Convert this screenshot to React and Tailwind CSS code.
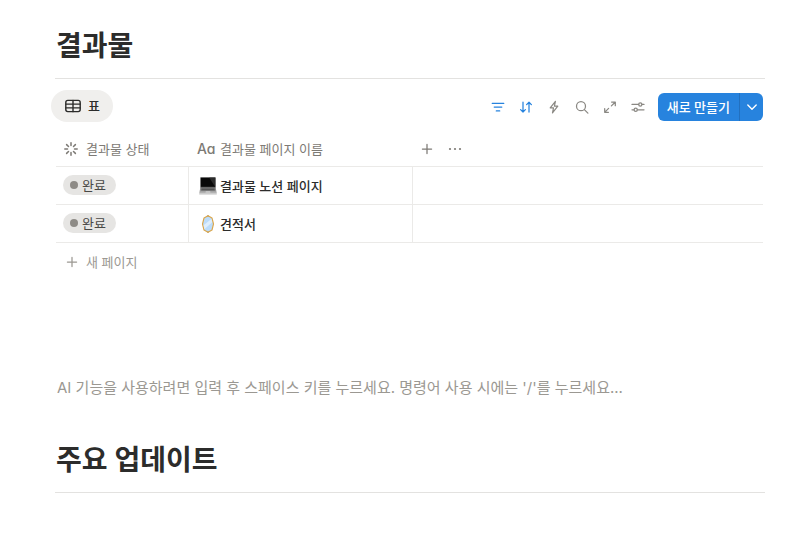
import React, { useState } from 'react';

const rows = [
  { id: 1, status: '완료', name: '결과물 노션 페이지', icon: 'laptop' },
  { id: 2, status: '완료', name: '견적서', icon: 'mirror' },
];

// ICONS
const Icon = ({ size = 16, children }) => (
  <svg width={size} height={size} viewBox="0 0 16 16" fill="none" stroke="currentColor" strokeWidth="1.25" strokeLinecap="round" strokeLinejoin="round" aria-hidden="true" className="shrink-0">
    {children}
  </svg>
);

const TableIcon = () => (
  <Icon size={18}>
    <rect x="1.6" y="3" width="12.8" height="10" rx="1.8" />
    <path d="M1.6 6.3h12.8M1.6 9.7h12.8M8 3v10" />
  </Icon>
);

const FilterIcon = () => (
  <Icon><path d="M2.2 4.3h11.6M4.2 8.1h7.6M6.3 11.9h3.4" /></Icon>
);

const SortIcon = () => (
  <Icon><path d="M5 3.2v9.8M2.6 10.6 5 13l2.4-2.4M11 13V3.2M8.6 5.6 11 3.2l2.4 2.4" /></Icon>
);

const BoltIcon = () => (
  <Icon><path d="M9.4 2.3 4.2 8.8h3.3L6.5 13.8 11.8 7.2H8.4z" strokeWidth="1.2" /></Icon>
);

const SearchIcon = () => (
  <Icon><circle cx="7" cy="7.2" r="4.5" /><path d="m10.4 10.6 3.5 3.5" /></Icon>
);

const ExpandIcon = () => (
  <Icon><path d="M9.6 3h3.7v3.7M13.1 3.2 9.4 6.9M6.4 13.3H2.7V9.6M2.9 13.1l3.7-3.7" /></Icon>
);

const SettingsIcon = () => (
  <Icon>
    <path d="M2 5.4h6.6M12 5.4h2M2 10.8h2M7.4 10.8H14" />
    <circle cx="10.3" cy="5.4" r="1.6" />
    <circle cx="5.7" cy="10.8" r="1.6" />
  </Icon>
);

const StatusIcon = () => (
  <svg width="14" height="14" viewBox="0 0 14 14" fill="none" stroke="currentColor" strokeWidth="1.5" strokeLinecap="round" aria-hidden="true" className="shrink-0">
    <path d="M7 .8v2.7M7 10.5v2.7M.8 7h2.7M10.5 7h2.7M2.6 2.6l1.9 1.9M9.5 9.5l1.9 1.9M2.6 11.4l1.9-1.9M9.5 4.5l1.9-1.9" />
  </svg>
);

const PlusIcon = () => (
  <Icon><path d="M8 3.4v9.2M3.4 8h9.2" /></Icon>
);

const LaptopIcon = () => (
  <svg width="18" height="18" viewBox="0 0 18 18" aria-hidden="true" className="shrink-0">
    <defs>
      <linearGradient id="base" x1="0" y1="0" x2="0" y2="1">
        <stop offset="0" stopColor="#777" />
        <stop offset="1" stopColor="#b8b8b8" />
      </linearGradient>
    </defs>
    <path d="M1.3.3h15.4v10.6H1.3z" fill="#555" />
    <path d="M1.9.8h14.2v9H1.9z" fill="#080808" />
    <path d="M10.3.8h5.8v9z" fill="#2b2b2b" />
    <path d="M1.3 10.9h15.4l1.1 5.1H.2z" fill="url(#base)" />
    <path d="M2.5 11.5h13l.4 1.9H2.1z" fill="#555" />
    <path d="M6.8 14.2h4.4l.3 1.5h-5z" fill="#ccc" />
    <path d="M.2 16h17.6v1.6H.2z" fill="#ccc" />
  </svg>
);

const MirrorIcon = () => (
  <svg width="18" height="18" viewBox="0 0 18 18" aria-hidden="true" className="shrink-0">
    <path d="M9 .7 13 3 14.5 9 13 15 9 17.3 5 15 3.5 9 5 3z" fill="#bcdcfa" stroke="#dba64b" strokeWidth="1.1" strokeLinejoin="round" />
    <path d="M4.6 10.2 12.4 4l.8 3.2-7.8 7z" fill="#deeefd" />
    <circle cx="9" cy=".9" r=".7" fill="#b98530" />
    <circle cx="9" cy="17.1" r=".7" fill="#b98530" />
  </svg>
);

const tools = [
  { label: '필터', icon: FilterIcon, active: true },
  { label: '정렬', icon: SortIcon, active: true },
  { label: '자동화', icon: BoltIcon },
  { label: '검색', icon: SearchIcon },
  { label: '전체 화면', icon: ExpandIcon },
  { label: '설정', icon: SettingsIcon },
];

const Heading = ({ children }) => (
  <h2 className="border-b border-[#e3e2e0] pt-px pb-3.5 pl-px text-[28px] leading-9 font-semibold">{children}</h2>
);

export default function App() {
  const [text, setText] = useState('');

  return (
    <main className="min-h-screen bg-white pt-[27px] pr-8 pb-12 pl-[55px] font-['Inter','Noto_Sans_CJK_KR',sans-serif] text-[#2c2c2b]">
      <Heading>결과물</Heading>

      {/* VIEW BAR */}
      <div className="mt-[11px] -ml-1 mr-0.5 flex items-center justify-between">
        <button type="button" className="flex h-8 items-center gap-1.5 rounded-full bg-[#f0efed] px-[13px] text-[13px] leading-5 font-medium">
          <TableIcon />
          표
        </button>
        <div className="flex items-center pt-0.5">
          {tools.map(({ label, icon: ToolIcon, active }) => (
            <button
              key={label}
              type="button"
              aria-label={label}
              className={`flex size-7 items-center justify-center ${active ? 'text-[#2783de]' : 'text-[#8a8883]'}`}
            >
              <ToolIcon />
            </button>
          ))}
          <div className="ml-1.5 flex h-7 overflow-hidden rounded-md bg-[#2783de] text-white">
            <button type="button" className="px-[9px] text-[13px] leading-5 font-medium">새로 만들기</button>
            <button type="button" aria-label="새로 만들기 옵션" className="flex w-6 items-center justify-center border-l border-[#2270bf]">
              <svg width="12" height="12" viewBox="0 0 12 12" fill="none" stroke="currentColor" strokeWidth="1.4" strokeLinecap="round" strokeLinejoin="round" aria-hidden="true">
                <path d="m1.8 4 4.2 4.2L10.2 4" />
              </svg>
            </button>
          </div>
        </div>
      </div>

      {/* TABLE */}
      <div className="mt-2.5 mr-0.5 ml-px">
        <table className="w-full table-fixed border-separate border-spacing-0 text-left text-[13px] leading-5">
          <thead className="text-[#7d7a75]">
            <tr className="h-[35px]">
              <th className="w-[133px] border-b border-[#ebeae8] px-2 font-normal">
                <span className="flex items-center gap-2"><StatusIcon />결과물 상태</span>
              </th>
              <th className="w-[224px] border-b border-[#ebeae8] px-2 font-normal">
                <span className="flex items-center">
                  <span className="w-[23px] text-sm font-medium [font-feature-settings:'cv11']">Aa</span>
                  결과물 페이지 이름
                </span>
              </th>
              <th className="border-b border-[#ebeae8] font-normal">
                <span className="flex">
                  <button type="button" aria-label="속성 추가" className="flex size-7 items-center justify-center"><PlusIcon /></button>
                  <button type="button" aria-label="더 보기" className="flex size-7 items-center justify-center">
                    <svg width="16" height="16" viewBox="0 0 16 16" fill="currentColor" aria-hidden="true">
                      <circle cx="3" cy="8" r="1.1" />
                      <circle cx="8" cy="8" r="1.1" />
                      <circle cx="13" cy="8" r="1.1" />
                    </svg>
                  </button>
                </span>
              </th>
            </tr>
          </thead>
          <tbody>
            {rows.map(row => (
              <tr key={row.id} className="h-[38px]">
                <td className="border-r border-b border-[#ebeae8] px-[7px] pb-0.5">
                  <span className="flex h-5 w-fit items-center gap-1 rounded-full bg-[#e6e5e3] pr-2.5 pl-[7px] text-[#494846]">
                    <span className="size-2 rounded-full bg-[#8e8b86]" />
                    {row.status}
                  </span>
                </td>
                <td className="border-r border-b border-[#ebeae8] px-2.5">
                  <span className="flex items-center gap-[3px] font-medium">
                    {row.icon === 'laptop' ? <LaptopIcon /> : <MirrorIcon />}
                    {row.name}
                  </span>
                </td>
                <td className="border-b border-[#ebeae8]" />
              </tr>
            ))}
          </tbody>
        </table>
        <button type="button" className="flex h-[38px] w-full items-center gap-1.5 px-2 text-[13px] leading-5 text-[#9b9892]">
          <PlusIcon />
          새 페이지
        </button>
      </div>

      <input
        type="text"
        aria-label="내용 입력"
        value={text}
        onChange={(e) => setText(e.target.value)}
        placeholder="AI 기능을 사용하려면 입력 후 스페이스 키를 누르세요. 명령어 사용 시에는 '/'를 누르세요..."
        className="mt-[91px] mb-[39px] block h-[30px] w-full pl-0.5 text-[15px] outline-none placeholder:text-[#9b9892]"
      />

      <Heading>주요 업데이트</Heading>
    </main>
  );
}
